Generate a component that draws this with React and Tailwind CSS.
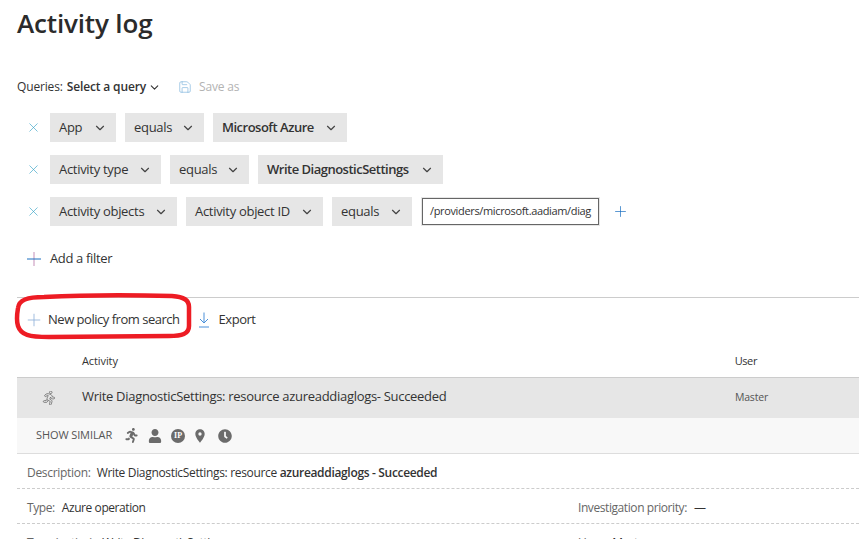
import { X, Plus, ChevronDown, Save } from "lucide-react";
import { FaRunning, FaUser, FaClock } from "react-icons/fa";
import { MdPlace } from "react-icons/md";

const FILTERS = [
  [
    { label: "App", w: "w-[66px]" },
    { label: "equals", w: "w-[79px]" },
    { label: "Microsoft Azure", w: "w-[134px]", bold: true },
  ],
  [
    { label: "Activity type", w: "w-[111px]" },
    { label: "equals", w: "w-[79px]" },
    { label: "Write DiagnosticSettings", w: "w-[185px]", bold: true },
  ],
  [
    { label: "Activity objects", w: "w-[127px]" },
    { label: "Activity object ID", w: "w-[137px]" },
    { label: "equals", w: "w-[80px]" },
  ],
];

function Chip({ label, w, bold }) {
  return (
    <div className={`${w} h-[29px] bg-[#e6e6e6] flex items-center justify-between pl-[9px] pr-[9px] text-[13px] text-[#333] ${bold ? "font-semibold tracking-[-0.5px]" : "tracking-[-0.3px]"}`}>
      <span className="whitespace-nowrap">{label}</span>
      <ChevronDown size={14} strokeWidth={2} className="text-[#444]" />
    </div>
  );
}

function FilterRow({ chips, children }) {
  return (
    <div className="h-[29px] flex items-center gap-[9px]">
      <X size={15} strokeWidth={1} className="ml-[9px] text-[#2f9fc4]" />
      {chips.map((c, i) => <Chip key={i} {...c} />)}
      {children}
    </div>
  );
}

function RowField({ label, children, className = "" }) {
  return (
    <span className={`text-[12px] tracking-[-0.42px] ${className}`}>
      <span className="text-[#666]">{label}</span>
      <span className="ml-[7px] text-[#333]">{children}</span>
    </span>
  );
}

export default function App() {
  return (
    <div className="relative w-[859px] h-[539px] overflow-hidden bg-white text-[#333] font-['Open_Sans','Noto_Sans',sans-serif]">
      <div className="pl-[17px]">
        <h1 className="h-[45px] flex items-center text-[26px] leading-none font-semibold tracking-[-0.15px] text-[#2b2b2b]">Activity log</h1>

        <div className="mt-[30px] h-[24px] flex items-center text-[12px] tracking-[-0.15px]">
          <span>Queries:</span>
          <span className="ml-[4px] font-semibold">Select a query</span>
          <ChevronDown size={13} strokeWidth={2} className="ml-[2px]" />
          <Save size={14} strokeWidth={1} className="ml-[17px] text-[#6aa8d8]" />
          <span className="ml-[7px] text-[#b3b3b3]">Save as</span>
        </div>

        <div className="mt-[14px] flex flex-col gap-[13px]">
          <FilterRow chips={FILTERS[0]} />
          <FilterRow chips={FILTERS[1]} />
          <FilterRow chips={FILTERS[2]}>
            <div className="w-[177px] h-[27px] ml-[1px] border border-[#666] outline outline-1 outline-[#e6e6e6] flex items-center pl-[7px] text-[11px] tracking-[-0.35px] text-[#333] whitespace-nowrap overflow-hidden">
              /providers/microsoft.aadiam/diag
            </div>
            <Plus size={17} strokeWidth={1} className="ml-[4px] text-[#1a6fc0]" />
          </FilterRow>
        </div>

        <div className="mt-[21px] h-[24px] flex items-center pl-[10px] text-[13px] tracking-[-0.35px]">
          <svg width="14" height="14" viewBox="0 0 14 14" fill="none">
            <path d="M7 0 V14" stroke="#c58fb8" />
            <path d="M0 7 H14" stroke="#1a6fc0" />
          </svg>
          <span className="ml-[9px]">Add a filter</span>
        </div>

        <div className="mt-[26px] border-t border-[#ccc] h-[44px] flex items-center text-[13px] tracking-[-0.48px]">
          <Plus size={20} strokeWidth={1} className="ml-[7px] text-[#8fb0d8]" />
          <span className="ml-[4px]">New policy from search</span>
          <svg className="ml-[18px]" width="12" height="16" viewBox="0 0 12 16" fill="none" stroke="#4a90d9">
            <path d="M6 0.5 V11 M2 7 L6 11 L10 7 M1 15 H11" />
          </svg>
          <span className="ml-[9px]">Export</span>
        </div>

        <div className="h-[36px] pt-[4px] flex items-center text-[11px] tracking-[-0.1px] text-[#333]">
          <span className="ml-[65px]">Activity</span>
          <span className="ml-auto mr-[102px] tracking-[-0.4px]">User</span>
        </div>

        <div className="h-[41px] bg-[#e6e6e6] border-t border-[#ccc] flex items-center">
          <FaRunning size={14} className="ml-[25px] fill-none stroke-[#666] stroke-[28px]" />
          <span className="ml-[26px] pb-[2px] text-[13px] tracking-[-0.3px] text-[#333]">Write DiagnosticSettings: resource azureaddiaglogs- Succeeded</span>
          <span className="ml-auto mr-[91px] text-[10.5px] tracking-[-0.2px] text-[#555]">Master</span>
        </div>

        <div className="h-[36px] bg-[#f8f8f8] border-b border-[#ddd] flex items-center text-[#6b6b6b]">
          <span className="ml-[19px] text-[11px] tracking-[-0.1px] text-[#555]">SHOW SIMILAR</span>
          <FaRunning size={15} className="ml-[12px]" />
          <FaUser size={14} className="ml-[9px]" />
          <div className="ml-[9px] w-[14px] h-[14px] rounded-full bg-[#6b6b6b] flex items-center justify-center text-[8px] font-bold leading-none text-white font-['Liberation_Serif',serif]">IP</div>
          <MdPlace size={16} className="ml-[7px]" />
          <FaClock size={14} className="ml-[10px]" />
        </div>

        <div className="h-[35px] pt-[3px] border-b border-dashed border-[#ccc] flex items-center pl-[10px]">
          <span className="text-[12px] tracking-[-0.3px] text-[#666]">Description:</span>
          <span className="ml-[6px] text-[12px] tracking-[-0.33px] text-[#333]">Write DiagnosticSettings: resource <b className="font-semibold">azureaddiaglogs - Succeeded</b></span>
        </div>

        <div className="h-[35px] pt-[3px] border-b border-dashed border-[#ccc] flex items-center pl-[10px]">
          <RowField label="Type:" className="w-[551px]">Azure operation</RowField>
          <RowField label="Investigation priority:">—</RowField>
        </div>

        <div className="h-[35px] pt-[3px] flex items-center pl-[10px]">
          <RowField label="Type (native):" className="w-[551px]">Write DiagnosticSettings</RowField>
          <RowField label="User:">Master</RowField>
        </div>
      </div>

      {/* red marker drawn around the button */}
      <svg className="absolute left-[14px] top-[293px]" width="180" height="48" viewBox="0 0 180 48" fill="none">
        <path d="M4 15 C5 7 13 4 30 4 C70 2 120 2 158 3 C170 4 175 7 175 14 L175 33 C175 41 168 43 155 43 L35 44 C15 44 7 42 4 33 C2 27 3 21 4 15 Z" stroke="#ed1c24" strokeWidth="4.5" />
      </svg>
    </div>
  );
}
